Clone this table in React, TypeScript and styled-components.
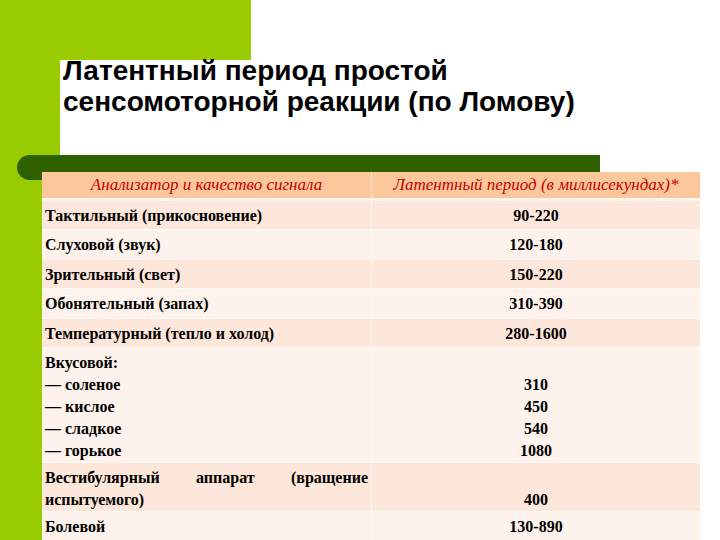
import React from "react";
import styled, { createGlobalStyle } from "styled-components";

const GlobalStyle = createGlobalStyle`
  html, body {
    margin: 0;
    padding: 0;
    background: #ffffff;
  }
`;

const Slide = styled.div`
  width: 720px;
  height: 540px;
  overflow: hidden;
  background:
    linear-gradient(#99cc00, #99cc00) 0 0 / 251px 60px no-repeat,
    linear-gradient(#99cc00, #99cc00) 0 0 / 60px 100% no-repeat,
    #ffffff;
`;

const TitleArea = styled.div`
  height: 155px;
  box-sizing: border-box;
  padding: 55px 0 0 63px;
`;

const Title = styled.h1`
  margin: 0;
  font-family: "Liberation Sans", Arial, sans-serif;
  font-weight: bold;
  font-size: 28px;
  line-height: 31px;
  color: #000000;
`;

const Bar = styled.div`
  margin-left: 17px;
  width: 583px;
  height: 25px;
  border-radius: 12.5px 0 0 12.5px;
  background: #2f6000;
`;

const Table = styled.table`
  position: relative;
  margin: -8px 0 0 42px;
  width: 658px;
  table-layout: fixed;
  border-collapse: separate;
  border-spacing: 0;
  background: #fffaf6;
  font-family: "Liberation Serif", "Times New Roman", serif;
  font-size: 16px;
  line-height: 22px;
`;

const HeadCell = styled.th<{ $first?: boolean }>`
  width: ${(p) => (p.$first ? "330px" : "auto")};
  box-sizing: border-box;
  height: 29px;
  padding: 0;
  background: #fcc89b;
  color: #c40000;
  font-size: 17px;
  font-style: italic;
  font-weight: normal;
  text-align: center;
  border-bottom: 3px solid #fff6ee;
  border-right: ${(p) => (p.$first ? "1px solid #fde4cc" : "none")};
`;

const Row = styled.tr<{ $dark?: boolean }>`
  background: ${(p) => (p.$dark ? "#fde6da" : "#fef3ec")};
`;

const Cell = styled.td<{ $justify?: boolean; $multi?: boolean }>`
  padding: 4px 3px ${(p) => (p.$multi ? "0" : "2.4px")};
  border-bottom: 1px solid #fffaf6;
  border-right: 1px solid #fff6f0;
  font-weight: bold;
  color: #000000;
  text-align: ${(p) => (p.$justify ? "justify" : "left")};
  vertical-align: top;
`;

const ValueCell = styled.td<{ $multi?: boolean }>`
  padding: 4px 3px ${(p) => (p.$multi ? "0" : "2.4px")};
  border-bottom: 1px solid #fffaf6;
  font-weight: bold;
  color: #000000;
  text-align: center;
  vertical-align: top;
`;

type Item = { name: React.ReactNode; value: React.ReactNode; justify?: boolean; multi?: boolean };

const rows: Item[] = [
  { name: "Тактильный (прикосновение)", value: "90-220" },
  { name: "Слуховой (звук)", value: "120-180" },
  { name: "Зрительный (свет)", value: "150-220" },
  { name: "Обонятельный (запах)", value: "310-390" },
  { name: "Температурный (тепло и холод)", value: "280-1600" },
  {
    name: (
      <>
        Вкусовой:
        <br />— соленое
        <br />— кислое
        <br />— сладкое
        <br />— горькое
      </>
    ),
    value: (
      <>
        <br />310
        <br />450
        <br />540
        <br />1080
      </>
    ),
    multi: true,
  },
  {
    name: "Вестибулярный аппарат (вращение испытуемого)",
    value: (
      <>
        <br />400
      </>
    ),
    justify: true,
    multi: true,
  },
  { name: "Болевой", value: "130-890" },
];

export default function App() {
  return (
    <>
      <GlobalStyle />
      <Slide>
        <TitleArea>
          <Title>
            Латентный период простой
            <br />
            сенсомоторной реакции (по Ломову)
          </Title>
        </TitleArea>
        <Bar />
        <Table>
          <thead>
            <tr>
              <HeadCell $first>Анализатор и качество сигнала</HeadCell>
              <HeadCell>Латентный период (в миллисекундах)*</HeadCell>
            </tr>
          </thead>
          <tbody>
            {rows.map((r, i) => (
              <Row key={i} $dark={i % 2 === 0}>
                <Cell $justify={r.justify} $multi={r.multi}>
                  {r.name}
                </Cell>
                <ValueCell $multi={r.multi}>{r.value}</ValueCell>
              </Row>
            ))}
          </tbody>
        </Table>
      </Slide>
    </>
  );
}
